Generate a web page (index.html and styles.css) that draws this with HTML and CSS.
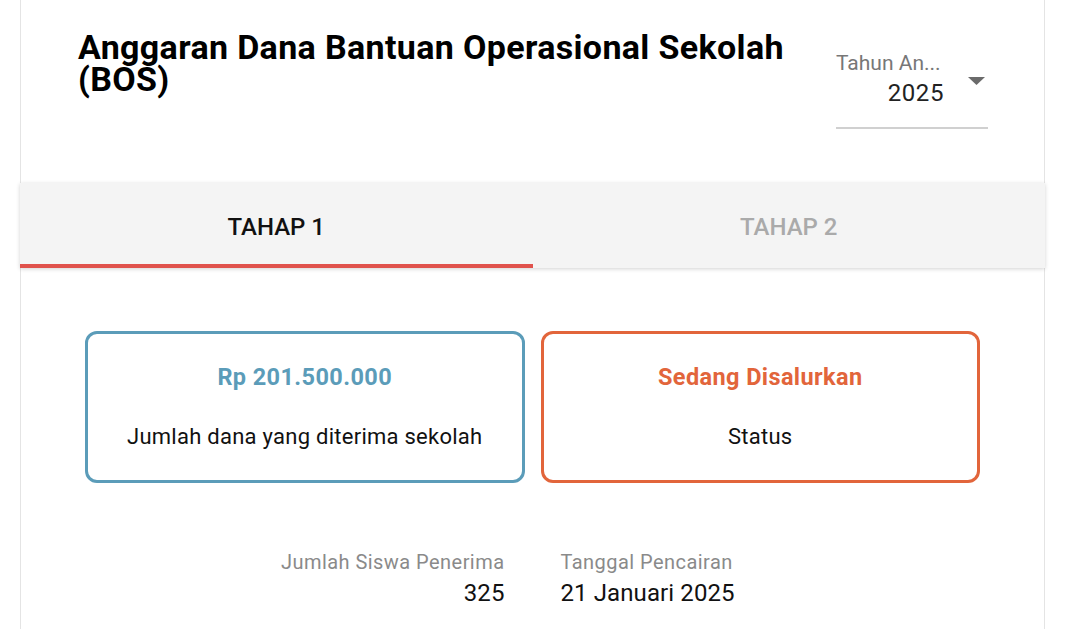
FILE: index.html
```html
<!DOCTYPE html>
<html>
<head>
<meta charset="utf-8">
<link rel="stylesheet" href="styles.css">
</head>
<body>
<div class="page">
  <header class="header">
    <h1 class="title">Anggaran Dana Bantuan Operasional Sekolah (BOS)</h1>
    <div class="select">
      <div class="select-label">Tahun An...</div>
      <div class="select-row">
        <span class="select-value">2025</span>
        <svg class="select-arrow" width="17" height="8" viewBox="0 0 17 8"><path d="M0 0 L17 0 L8.5 8 Z" fill="#6b6b6b"/></svg>
      </div>
    </div>
  </header>
  <nav class="tabs">
    <div class="tab active">TAHAP 1</div>
    <div class="tab">TAHAP 2</div>
  </nav>
  <section class="cards">
    <div class="card card-blue">
      <div class="card-value">Rp 201.500.000</div>
      <div class="card-label">Jumlah dana yang diterima sekolah</div>
    </div>
    <div class="card card-orange">
      <div class="card-value">Sedang Disalurkan</div>
      <div class="card-label">Status</div>
    </div>
  </section>
  <section class="info">
    <div class="info-col info-left">
      <div class="info-label">Jumlah Siswa Penerima</div>
      <div class="info-value">325</div>
    </div>
    <div class="info-col">
      <div class="info-label">Tanggal Pencairan</div>
      <div class="info-value">21 Januari 2025</div>
    </div>
  </section>
</div>
</body>
</html>
```
FILE: styles.css
```css
* { box-sizing: border-box; }
html, body { margin: 0; padding: 0; background: #fff; }
body { font-family: Roboto, "Noto Sans", sans-serif; color: #111; overflow: hidden; }
.page {
  margin-left: 20px;
  width: 1025px;
  height: 629px;
  border-left: 1px solid #e4e4e4;
  border-right: 1px solid #e4e4e4;
}
.header {
  display: flex;
  justify-content: space-between;
  align-items: flex-start;
  padding: 31px 56px 0 57px;
  height: 183px;
}
.title {
  margin: 0;
  width: 730px;
  font-size: 34px;
  font-weight: 700;
  line-height: 32px;
  color: #000;
  letter-spacing: 0.35px;
}
.select {
  width: 152px;
  margin-top: 20px;
  border-bottom: 2px solid #d0d0d0;
  padding-bottom: 20px;
}
.select-label {
  font-size: 21px;
  color: #777;
  line-height: 24px;
}
.select-row {
  display: flex;
  justify-content: flex-end;
  align-items: flex-start;
  margin-top: 4px;
}
.select-value {
  font-size: 24px;
  color: #222;
  line-height: 28px;
  letter-spacing: 0.6px;
}
.select-arrow { margin-left: 24px; margin-right: 3px; margin-top: -2px; }
.tabs {
  display: flex;
  height: 85px;
  margin: 0 -1px;
  background: #f4f4f4;
  box-shadow: 0 1px 4px rgba(0,0,0,0.18);
}
.tab {
  flex: 1;
  display: flex;
  align-items: center;
  justify-content: center;
  font-size: 24px;
  font-weight: 500;
  color: #aaa;
  border-bottom: 4px solid transparent;
  padding-top: 6px;
}
.tab.active { color: #111; border-bottom-color: #e0524c; }
.cards {
  display: flex;
  gap: 16px;
  padding: 63px 64px 0 64px;
}
.card {
  flex: 1;
  height: 152px;
  border: 3px solid;
  border-radius: 12px;
  display: flex;
  flex-direction: column;
  align-items: center;
  padding-top: 29px;
}
.card-blue { border-color: #5b9cb9; }
.card-orange { border-color: #e2653b; }
.card-value { font-size: 23.5px; font-weight: 700; line-height: 28px; letter-spacing: 0.4px; }
.card-blue .card-value { color: #5b9cb9; }
.card-orange .card-value { color: #e2653b; }
.card-label { font-size: 22px; color: #111; margin-top: 32.5px; line-height: 26px; letter-spacing: 0.26px; }
.info {
  display: grid;
  grid-template-columns: 1fr 1fr;
  column-gap: 56px;
  padding-top: 67px;
}
.info-left { text-align: right; }
.info-label { font-size: 20px; color: #8a8a8a; line-height: 24px; letter-spacing: 0.45px; }
.info-value { font-size: 24px; color: #111; line-height: 28px; margin-top: 5px; letter-spacing: 0.1px; }
```
